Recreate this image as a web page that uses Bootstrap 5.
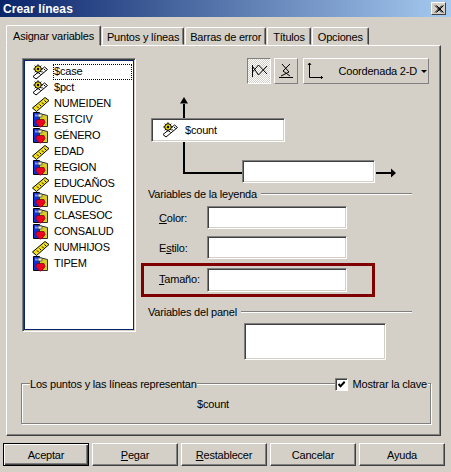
<!DOCTYPE html>
<html lang="es">
<head>
<meta charset="utf-8">
<title>Crear líneas</title>
<link href="https://cdn.jsdelivr.net/npm/bootstrap@5.3.0/dist/css/bootstrap.min.css" rel="stylesheet">
<style>
html,body{height:472px;overflow:hidden}
body{margin:0;background:#d4d0c8;color:#000;font:11px/14px "Liberation Sans",Arial,sans-serif;letter-spacing:-.2px}
.dlg{width:451px;height:472px}
.tbar{height:17px;margin-bottom:8px;padding:0 5px 0 3px;background:linear-gradient(90deg,#0a246a,#a6caf0);color:#fff;font-weight:700;font-size:12px;letter-spacing:.1px}
.xbtn{width:15px;height:13px;padding:0;background:#d4d0c8;border:1px solid;border-color:#fff #404040 #404040 #fff;border-radius:0}
.xbtn svg{display:block;margin:1px 0 0 2px}
.tabs{height:20px;padding-left:6px;border:0;align-items:flex-end;gap:1px;position:relative;z-index:1}
.tabs .nav-link{height:18px;margin:0;padding:2px 4px 0;color:#000;font-size:11px;line-height:14px;background:#d4d0c8;border:1px solid;border-color:#fff #404040 #d4d0c8 #fff;border-radius:2px 2px 0 0;box-shadow:inset -1px 0 0 #808080}
.tabs .nav-link.active{height:21px;margin-bottom:-1px;padding:3px 6px 0;background:#d4d0c8;color:#000;border-color:#fff #404040 #d4d0c8 #fff}
.tabs .tab-roomy{padding-left:5px;padding-right:5px}
.pane{width:435px;height:391px;margin-left:6px;padding:12px 0 0 15px;border:1px solid;border-color:#fff #404040 #404040 #fff;box-shadow:inset -1px -1px 0 #808080}
.vlist{width:114px;height:274px;padding:5px 0 0 3px;background:#fff;border:1px solid;border-color:#808080 #fff #fff #808080;box-shadow:inset 1px 1px 0 #404040,inset -1px -1px 0 #d4d0c8,inset 0 0 0 2px #0a246a;border-radius:0}
.vlist .list-group-item{height:16px;padding:0 0 0 5px;margin:0;border:0;background:none;color:#000;font-size:11px;line-height:16px;gap:3px}
.vlist svg{width:19px;height:16px;flex:none}
.vlist .list-group-item span{padding:0 3px 0 1px;flex:1;height:16px;line-height:15px;margin-right:3px}
.vlist .sel{outline:1px dotted #000;outline-offset:-1px}
.rcol{width:290px;margin-left:5px}
.tool{height:26px;padding:0;background:#d4d0c8;border:1px solid;border-color:#fff #808080 #808080 #fff;border-radius:0;color:#000;font-size:11px;letter-spacing:-.2px}
.tool.sq{width:24px}
.tool.on{background:repeating-conic-gradient(#fff 0 25%,#d4d0c8 0 50%) 0 0/2px 2px;border-color:#808080 #fff #fff #808080}
.tool.wide{width:126px;margin-left:2px;padding:0 1px 0 3px;flex:none}
.tool svg{display:block}
.tools{gap:3px;padding-right:2px;height:26px}
.tri{width:0;height:0;border:3px solid transparent;border-top:3px solid #000;border-bottom:0;margin-left:4px}
.plot{height:103px;padding-top:34px;position:relative}
.plot>svg{position:absolute;left:0;top:0}
.well-in{display:block;background:#fff;border:1px solid;border-color:#808080 #fff #fff #808080;box-shadow:inset 1px 1px 0 #404040,inset -1px -1px 0 #d4d0c8;border-radius:0;padding:0;min-height:0}
.well-in:focus{background:#fff;box-shadow:inset 1px 1px 0 #404040,inset -1px -1px 0 #d4d0c8;border-color:#808080 #fff #fff #808080}
.countbox{width:134px;height:24px;margin-left:10px;gap:5px;padding:0 0 0 9px;line-height:22px;position:relative}
.xbox{width:133px;height:23px;margin:18px 0 0 101px;position:relative}
.hd{height:14px;padding-left:7px;width:271px}
.hd i,.ghd i{display:block;flex:1;height:2px;border-top:1px solid #808080;border-bottom:1px solid #fff;margin-left:4px}
.frow{height:23px;margin-top:5px;padding-left:18px}
.frow+.frow{margin-top:7px}
.frow label{width:48px}
.frow .well-in{width:140px;height:23px}
.redbox{width:234px;height:34px;margin-top:4px;padding:2px 0 0 15px;border:3px solid #800000}
.redbox label{width:48px}
.redbox .well-in{width:140px;height:24px}
.hd2{margin-top:8px;height:14px}
.panelin{width:142px;height:37px;margin:4px 0 0 103px}
.grp{width:410px;height:41px;margin:23px 0 0 -1px;border:1px solid #808080;box-shadow:1px 1px 0 #fff,inset 1px 1px 0 #fff}
.ghd{height:14px;margin-top:-7px;padding-left:8px;padding-right:2px}
.ghd>span{background:#d4d0c8}
.ghd i{margin-left:0}
.ghd .form-check{min-height:0;margin:0;padding:0 1px 0 0;background:#d4d0c8;gap:5px;height:14px}
.ghd .form-check-input{float:none;flex:none;width:13px;height:13px;margin:0;border-radius:0;border:1px solid;border-color:#808080 #fff #fff #808080;box-shadow:inset 1px 1px 0 #404040;background-color:#fff;background-image:url("data:image/svg+xml,%3csvg xmlns='http://www.w3.org/2000/svg' viewBox='0 0 11 11'%3e%3cpath fill='none' stroke='%23000' stroke-width='2' d='M2.5 5l2 2.2L8.7 2.8'/%3e%3c/svg%3e");background-size:11px 11px}
.gval{padding:6px 26px 0 0}
.btns{gap:3px;padding:7px 0 0 3px}
.wbtn{width:86px;height:23px;padding:0;background:#d4d0c8;color:#000;font-size:11px;line-height:14px;border:1px solid;border-color:#fff #404040 #404040 #fff;border-radius:0;box-shadow:inset -1px -1px 0 #808080;letter-spacing:-.2px}
.wbtn.def{border-color:#000;box-shadow:inset 1px 1px 0 #fff,inset -1px -1px 0 #404040,inset -2px -2px 0 #808080}
.wbtn:hover,.wbtn:active{background:#d4d0c8;color:#000}
</style>
</head>
<body>
<svg width="0" height="0" class="d-block position-absolute">
  <symbol id="scale" viewBox="0 0 19 16">
    <path d="M2 12.500 13.500 3l3 2.500L5 15z" fill="#fff" stroke="#000"/>
    <path d="M8 9l1.500 1.500M10.500 7l1.500 1.500M13 5l1.500 1.500" stroke="#000" fill="none"/>
    <circle cx="7" cy="5" r="3.300" fill="#e8d800" stroke="#000"/>
    <circle cx="7" cy="5" r="1.200" fill="#000"/>
    <path d="M7 .3v1.400M7 8.300v1.400M2.300 5h1.400M10.300 5h1.400M3.700 1.700l1 1M9.300 7.300l1 1M3.700 8.300l1-1M9.300 2.700l1-1" stroke="#000" fill="none"/>
  </symbol>
  <symbol id="ruler" viewBox="0 0 19 16">
    <path d="M1.500 12 14 1.500l4 3L5.500 15.500z" fill="#f0e020" stroke="#000"/>
    <path d="M6 10.500l1.500 1.500M8.500 8.500l1.500 1.500M11 6.500l1.500 1.500M13.500 4.500l1.500 1.500" stroke="#000" fill="none"/>
  </symbol>
  <symbol id="nom" viewBox="0 0 19 16">
    <path d="M2.500.5h6v14h-6z" fill="#1030d0" stroke="#000"/>
    <path d="M4 2.500h3v2H4z" fill="#80a0f0"/>
    <path d="M8.500 1.500l8 2v11h-8z" fill="#d8d020" stroke="#303030"/>
    <path d="M7 2h4v3H7z" fill="#e8e8e8" stroke="#404040" stroke-width=".7"/>
    <path d="M6 7.500h7l1 3-2 3-2 1.500H9l-2-1.500-2-3z" fill="#f00020" stroke="#700020" stroke-width=".7"/>
  </symbol>
</svg>

<div class="dlg d-flex flex-column">
  <div class="tbar d-flex align-items-center justify-content-between">
    <span>Crear líneas</span>
    <button type="button" class="xbtn" aria-label="Cerrar"><svg width="10" height="9" viewBox="0 0 10 9"><path d="M1 .5l7 7M2.500.5l7 7M8 .5l-7 7M9.500.5l-7 7" stroke="#000" fill="none"/></svg></button>
  </div>

  <ul class="nav nav-tabs tabs">
    <li class="nav-item"><a class="nav-link active" href="#">Asignar variables</a></li>
    <li class="nav-item"><a class="nav-link" href="#">Puntos y líneas</a></li>
    <li class="nav-item"><a class="nav-link" href="#">Barras de error</a></li>
    <li class="nav-item"><a class="nav-link tab-roomy" href="#">Títulos</a></li>
    <li class="nav-item"><a class="nav-link tab-roomy" href="#">Opciones</a></li>
  </ul>

  <div class="pane">
    <div class="d-flex">
      <ul class="list-group vlist">
        <li class="list-group-item d-flex"><svg><use href="#scale"/></svg><span class="sel">$case</span></li>
        <li class="list-group-item d-flex"><svg><use href="#scale"/></svg><span>$pct</span></li>
        <li class="list-group-item d-flex"><svg><use href="#ruler"/></svg><span>NUMEIDEN</span></li>
        <li class="list-group-item d-flex"><svg><use href="#nom"/></svg><span>ESTCIV</span></li>
        <li class="list-group-item d-flex"><svg><use href="#nom"/></svg><span>GÉNERO</span></li>
        <li class="list-group-item d-flex"><svg><use href="#ruler"/></svg><span>EDAD</span></li>
        <li class="list-group-item d-flex"><svg><use href="#nom"/></svg><span>REGION</span></li>
        <li class="list-group-item d-flex"><svg><use href="#ruler"/></svg><span>EDUCAÑOS</span></li>
        <li class="list-group-item d-flex"><svg><use href="#nom"/></svg><span>NIVEDUC</span></li>
        <li class="list-group-item d-flex"><svg><use href="#nom"/></svg><span>CLASESOC</span></li>
        <li class="list-group-item d-flex"><svg><use href="#nom"/></svg><span>CONSALUD</span></li>
        <li class="list-group-item d-flex"><svg><use href="#ruler"/></svg><span>NUMHIJOS</span></li>
        <li class="list-group-item d-flex"><svg><use href="#nom"/></svg><span>TIPEM</span></li>
      </ul>

      <div class="rcol">
        <div class="tools d-flex justify-content-end">
          <button type="button" class="tool sq on d-flex align-items-center justify-content-center" aria-label="Líneas"><svg width="18" height="18" viewBox="0 0 18 18"><path d="M2.500 3v12M2.500 10l6-7 8.500 9M3 5l5.500 8L17 4" fill="none" stroke="#000"/></svg></button>
          <button type="button" class="tool sq d-flex align-items-center justify-content-center" aria-label="Áreas"><svg width="18" height="18" viewBox="0 0 18 18"><path d="M2 15.500h14M5 2l7 8-8 4M13 2L6 9l7 5" fill="none" stroke="#000"/></svg></button>
          <button type="button" class="tool wide d-flex align-items-center justify-content-between" aria-label="Coordenada 2-D">
            <svg width="20" height="20" viewBox="0 0 20 20"><path d="M2.500 2v14.500H16M1 4l1.500-2L4 4M14.500 15v3" fill="none" stroke="#000"/></svg>
            <span class="d-flex align-items-center text-nowrap">Coordenada 2-D<span class="tri"></span></span>
          </button>
        </div>

        <div class="plot">
          <svg width="290" height="103" viewBox="0 0 290 103" aria-hidden="true">
            <path d="M43 20V89h58M235 89h18" fill="none" stroke="#000" stroke-width="2"/>
            <path d="M43 13l-4 6.500h8zM255 89l-5-4.500v9z" fill="#000"/>
          </svg>
          <div class="well-in countbox d-flex"><svg width="19" height="16" class="align-self-center"><use href="#scale"/></svg><span>$count</span></div>
          <div class="well-in xbox"></div>
        </div>

        <div class="hd d-flex align-items-center"><span>Variables de la leyenda</span><i></i></div>
        <div class="frow d-flex align-items-center"><label><span class="text-decoration-underline">C</span>olor:</label><input class="form-control well-in" type="text" aria-label="Color"></div>
        <div class="frow d-flex align-items-center"><label>E<span class="text-decoration-underline">s</span>tilo:</label><input class="form-control well-in" type="text" aria-label="Estilo"></div>
        <div class="redbox d-flex align-items-start"><label class="pt-1"><span class="text-decoration-underline">T</span>amaño:</label><input class="form-control well-in" type="text" aria-label="Tamaño"></div>
        <div class="hd hd2 d-flex align-items-center"><span>Variables del panel</span><i></i></div>
        <div class="well-in panelin"></div>
      </div>
    </div>

    <div class="grp">
      <div class="ghd d-flex align-items-center">
        <span>Los puntos y las líneas representan</span><i></i>
        <div class="form-check d-flex align-items-center"><input class="form-check-input" type="checkbox" id="clave" checked><label class="form-check-label" for="clave">Mostrar la clave</label></div>
      </div>
      <div class="gval text-center">$count</div>
    </div>
  </div>

  <div class="btns d-flex">
    <button type="button" class="btn wbtn def">Aceptar</button>
    <button type="button" class="btn wbtn"><span class="text-decoration-underline">P</span>egar</button>
    <button type="button" class="btn wbtn"><span class="text-decoration-underline">R</span>establecer</button>
    <button type="button" class="btn wbtn">Cancelar</button>
    <button type="button" class="btn wbtn">Ayuda</button>
  </div>
</div>
</body>
</html>
